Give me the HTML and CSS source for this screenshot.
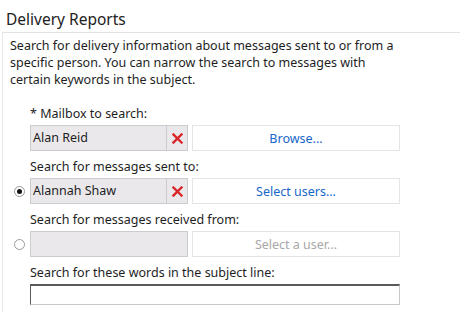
FILE: index.html
```html
<!DOCTYPE html>
<html lang="en">
<head>
    <meta charset="UTF-8">
    <title>Delivery Reports</title>
    <link rel="stylesheet" href="styles.css">
</head>
<body>

    <h1 class="title">Delivery Reports</h1>

    <div class="panel">
        <p class="intro">Search for delivery information about messages sent to or from a specific person. You can narrow the search to messages with certain keywords in the subject.</p>

        <div class="field">
            <label class="field-label">* Mailbox to search:</label>
            <div class="row">
                <span class="radio-slot"></span>
                <div class="picker">
                    <span class="picker-value">Alan Reid</span>
                    <span class="picker-clear">
                        <svg width="11" height="11" viewBox="0 0 11 11"><path d="M1.5 1.5 L9.5 9.5 M9.5 1.5 L1.5 9.5" stroke="#d9262b" stroke-width="2.4" stroke-linecap="square"/></svg>
                    </span>
                </div>
                <button class="pick-btn" type="button">Browse...</button>
            </div>
        </div>

        <div class="field">
            <label class="field-label">Search for messages sent to:</label>
            <div class="row">
                <span class="radio-slot"><span class="radio checked"></span></span>
                <div class="picker">
                    <span class="picker-value">Alannah Shaw</span>
                    <span class="picker-clear">
                        <svg width="11" height="11" viewBox="0 0 11 11"><path d="M1.5 1.5 L9.5 9.5 M9.5 1.5 L1.5 9.5" stroke="#d9262b" stroke-width="2.4" stroke-linecap="square"/></svg>
                    </span>
                </div>
                <button class="pick-btn" type="button">Select users...</button>
            </div>
        </div>

        <div class="field">
            <label class="field-label">Search for messages received from:</label>
            <div class="row">
                <span class="radio-slot"><span class="radio"></span></span>
                <div class="picker empty">
                    <span class="picker-value"></span>
                </div>
                <button class="pick-btn disabled" type="button">Select a user...</button>
            </div>
        </div>

        <div class="field">
            <label class="field-label" for="subject">Search for these words in the subject line:</label>
            <div class="row">
                <span class="radio-slot"></span>
                <input class="subject" type="text" id="subject">
            </div>
        </div>
    </div>

</body>
</html>
```

FILE: styles.css
```css
body {
    margin: 0;
    padding: 0;
    background-color: #fff;
    color: #1e1e1e;
    font-family: "Noto Sans", "Open Sans", sans-serif;
    font-size: 12.5px;
}

.title {
    margin: 0;
    padding: 8px 6px 0;
    height: 24px;
    font-size: 15.5px;
    font-weight: normal;
    line-height: 22px;
    color: #222;
}

.panel {
    margin-left: 2px;
    padding: 4px 8px 8px 7px;
    border-top: 1px solid #e2e2e2;
    border-left: 1px solid #e8e8e8;
}

.intro {
    margin: 0 0 17px;
    width: 398px;
    line-height: 17px;
}

.field {
    margin-bottom: 7px;
}

.field-label {
    display: block;
    padding-left: 20px;
    line-height: 17px;
    margin-bottom: 3px;
}

.row {
    display: flex;
    align-items: center;
}

.radio-slot {
    width: 20px;
    display: flex;
    align-items: center;
    padding-left: 4px;
    box-sizing: border-box;
}

.radio {
    width: 9px;
    height: 9px;
    border: 1px solid #9a9a9a;
    border-radius: 50%;
    background: #fff;
    position: relative;
}

.radio.checked::after {
    content: "";
    position: absolute;
    left: 2px;
    top: 2px;
    width: 5px;
    height: 5px;
    border-radius: 50%;
    background: #111;
}

.picker {
    display: flex;
    width: 158px;
    height: 26px;
    box-sizing: border-box;
    border: 1px solid #cdcbcf;
    background-color: #ebe8ec;
}

.picker-value {
    flex: 1;
    padding-left: 2px;
    line-height: 24px;
}

.picker-clear {
    width: 20px;
    border-left: 1px solid #cdcbcf;
    display: flex;
    align-items: center;
    justify-content: center;
}

.pick-btn {
    margin-left: 4px;
    width: 208px;
    height: 26px;
    border: 1px solid #e4e4e4;
    background: #fff;
    color: #1766c8;
    font-family: inherit;
    font-size: 12.5px;
    padding: 0;
}

.pick-btn.disabled {
    color: #a8a8a8;
}

.subject {
    width: 370px;
    height: 21px;
    box-sizing: border-box;
    margin: 0;
    padding: 0 3px;
    border: 1px solid #c8c8c8;
    border-top: 2px solid #5a5a5a;
    border-left-color: #5a5a5a;
    background: #fff;
    font-family: inherit;
    font-size: 12.5px;
}
```
